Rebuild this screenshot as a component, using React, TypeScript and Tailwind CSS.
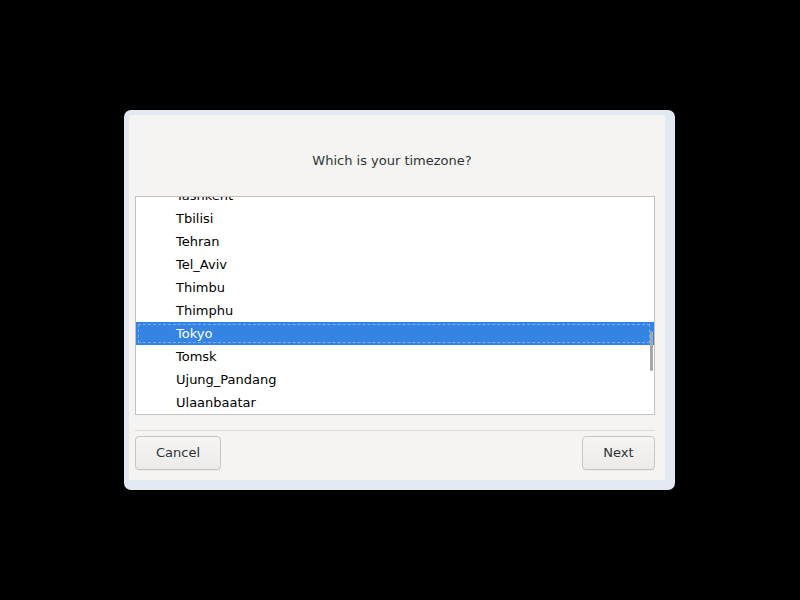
import React from 'react'

const zones = [
  'Tashkent',
  'Tbilisi',
  'Tehran',
  'Tel_Aviv',
  'Thimbu',
  'Thimphu',
  'Tokyo',
  'Tomsk',
  'Ujung_Pandang',
  'Ulaanbaatar',
]

export default function App() {
  const selected = 'Tokyo'

  return (
    <div className="h-[600px] w-[800px] bg-black pl-[124px] pt-[110px] font-['DejaVu_Sans',sans-serif] text-[13px]">
      <div className="h-[380px] w-[551px] rounded-[7px] border-[#e3e9f0] border-t-[5px] border-l-[5px] border-r-[10px] border-b-[10px] bg-[#f5f4f2] pl-[6px] pr-[10px]">
        <div className="flex h-full flex-col">
          <div className="pr-[6px] pt-[37px] text-center leading-[18px] text-[#2e3436]">Which is your timezone?</div>

          <div className="relative mt-[26px] h-[219px] overflow-hidden border border-[#c4c0bb] bg-white">
            <div className="-mt-[13px]">
              {zones.map((z) =>
                z === selected ? (
                  <div key={z} className="flex h-[23px] items-center bg-[#3584e4] pl-[40px] text-white">
                    <div className="pointer-events-none absolute left-[2px] right-[4px] h-[19px] border border-dashed border-[#7aaef0]" />
                    {z}
                  </div>
                ) : (
                  <div key={z} className="flex h-[23px] items-center pl-[40px] text-black">
                    {z}
                  </div>
                )
              )}
            </div>
            <div className="absolute right-[1px] top-[134px] h-[40px] w-[3px] rounded-full bg-[#a4a8a7]" />
          </div>

          <div className="mt-[15px] h-px bg-[#dcd9d5]" />

          <div className="mt-[5px] flex justify-between">
            <button className="h-[34px] w-[86px] rounded-[4px] border border-[#c9c5c0] bg-gradient-to-b from-[#f6f5f4] to-[#edebe9] text-[#2e3436] shadow-[0_1px_0_rgba(0,0,0,0.04)]">
              Cancel
            </button>
            <button className="h-[34px] w-[73px] rounded-[4px] border border-[#c9c5c0] bg-gradient-to-b from-[#f6f5f4] to-[#edebe9] text-[#2e3436] shadow-[0_1px_0_rgba(0,0,0,0.04)]">
              Next
            </button>
          </div>
        </div>
      </div>
    </div>
  )
}
